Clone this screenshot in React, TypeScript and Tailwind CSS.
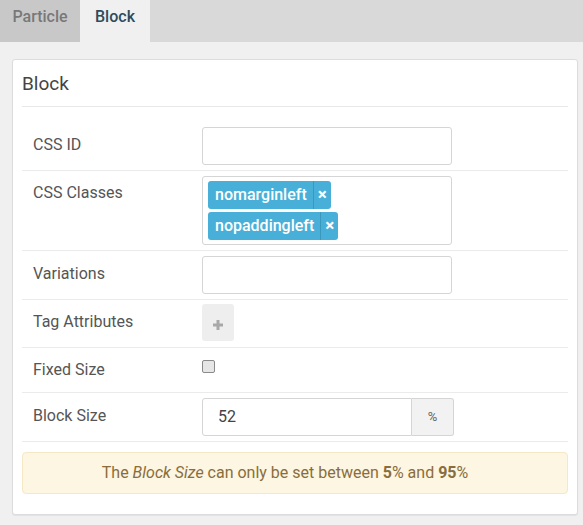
import React from "react";

function Row({
  label,
  children,
  className = "",
  labelClass = "leading-[38px]",
}: {
  label: string;
  children: React.ReactNode;
  className?: string;
  labelClass?: string;
}) {
  return (
    <div className={`flex border-b border-[#ebebeb] ${className}`}>
      <div className={`w-[180px] shrink-0 pl-[11px] text-[16px] text-[#555] ${labelClass}`}>{label}</div>
      <div className="flex-1">{children}</div>
    </div>
  );
}

function Tag({ text }: { text: string }) {
  return (
    <div className="flex h-[28px] w-fit items-stretch rounded-[3px] bg-[#48b0d8] text-white">
      <span className="flex items-center pl-[7px] pr-[6px] text-[16px] font-medium leading-none">{text}</span>
      <span className="flex w-[18px] items-center justify-center border-l border-[#3b98bd] pb-[1px] text-[17px] font-bold leading-none">
        ×
      </span>
    </div>
  );
}

export default function App() {
  return (
    <div className="min-h-[525px] bg-[#f0f0f0] font-['Roboto',sans-serif]">
      <div className="flex h-[42px] bg-[#d9d9d9] text-[16px]">
        <div className="flex w-[80px] items-center justify-center bg-[#c8c8c8] pb-[9px] font-medium text-[#787878]">
          Particle
        </div>
        <div className="flex w-[70px] items-center justify-center bg-[#f0f0f0] pb-[9px] font-medium text-[#2d4b5c]">
          Block
        </div>
      </div>

      <div className="ml-[12px] mr-[5px] mt-[17px] rounded-[3px] border border-[#dcdcdc] bg-white px-[9px] pb-[20px] shadow-[0_1px_1px_rgba(0,0,0,0.06)]">
        <div className="flex h-[47px] items-center border-b border-[#e8e8e8] pt-[2px] text-[19px] text-[#444]">
          Block
        </div>

        <Row label="CSS ID" className="pt-[20px] pb-[5px]" labelClass="leading-[36px]">
          <div className="h-[38px] w-[250px] rounded-[3px] border border-[#d5d5d5]" />
        </Row>

        <Row label="CSS Classes" className="pt-[5px] pb-[5px]" labelClass="leading-[34px]">
          <div className="flex h-[69px] w-[250px] flex-col gap-[3px] rounded-[3px] border border-[#d5d5d5] px-[5px] pt-[4px]">
            <Tag text="nomarginleft" />
            <Tag text="nopaddingleft" />
          </div>
        </Row>

        <Row label="Variations" className="pt-[5px] pb-[5px]" labelClass="leading-[36px]">
          <div className="h-[38px] w-[250px] rounded-[3px] border border-[#d5d5d5]" />
        </Row>

        <Row label="Tag Attributes" className="pt-[4px] pb-[6px]" labelClass="leading-[36px]">
          <div className="flex h-[37px] w-[32px] items-center justify-center rounded-[3px] bg-[#eeeeee] pt-[5px]">
            <svg width="10" height="10" viewBox="0 0 10 10">
              <rect x="3.5" y="0" width="3" height="10" fill="#a8a8a8" />
              <rect x="0" y="3.5" width="10" height="3" fill="#a8a8a8" />
            </svg>
          </div>
        </Row>

        <Row label="Fixed Size" className="pt-[5px] pb-[5px]" labelClass="leading-[34px]">
          <div className="h-[34px] pt-[7px]">
            <div className="h-[13px] w-[13px] rounded-[2px] border border-[#8a8a8a] bg-[#e6e6e6]" />
          </div>
        </Row>

        <Row label="Block Size" className="pt-[5px] pb-[5px]" labelClass="leading-[36px]">
          <div className="flex h-[38px] w-[252px]">
            <div className="flex flex-1 items-center rounded-l-[3px] border border-[#d5d5d5] pl-[15px] text-[16px] text-[#444]">
              52
            </div>
            <div className="flex w-[42px] items-center justify-center rounded-r-[3px] border border-l-0 border-[#d5d5d5] bg-[#f2f2f2] text-[13px] text-[#666]">
              %
            </div>
          </div>
        </Row>

        <div className="mt-[10px] flex h-[42px] items-center justify-center rounded-[4px] border border-[#f5e8c4] bg-[#fcf6e3] pr-[20px] text-[16px] text-[#8a6d3b]">
          <span>
            The <i>Block Size</i> can only be set between <b>5</b>% and <b>95</b>%
          </span>
        </div>
      </div>
    </div>
  );
}
